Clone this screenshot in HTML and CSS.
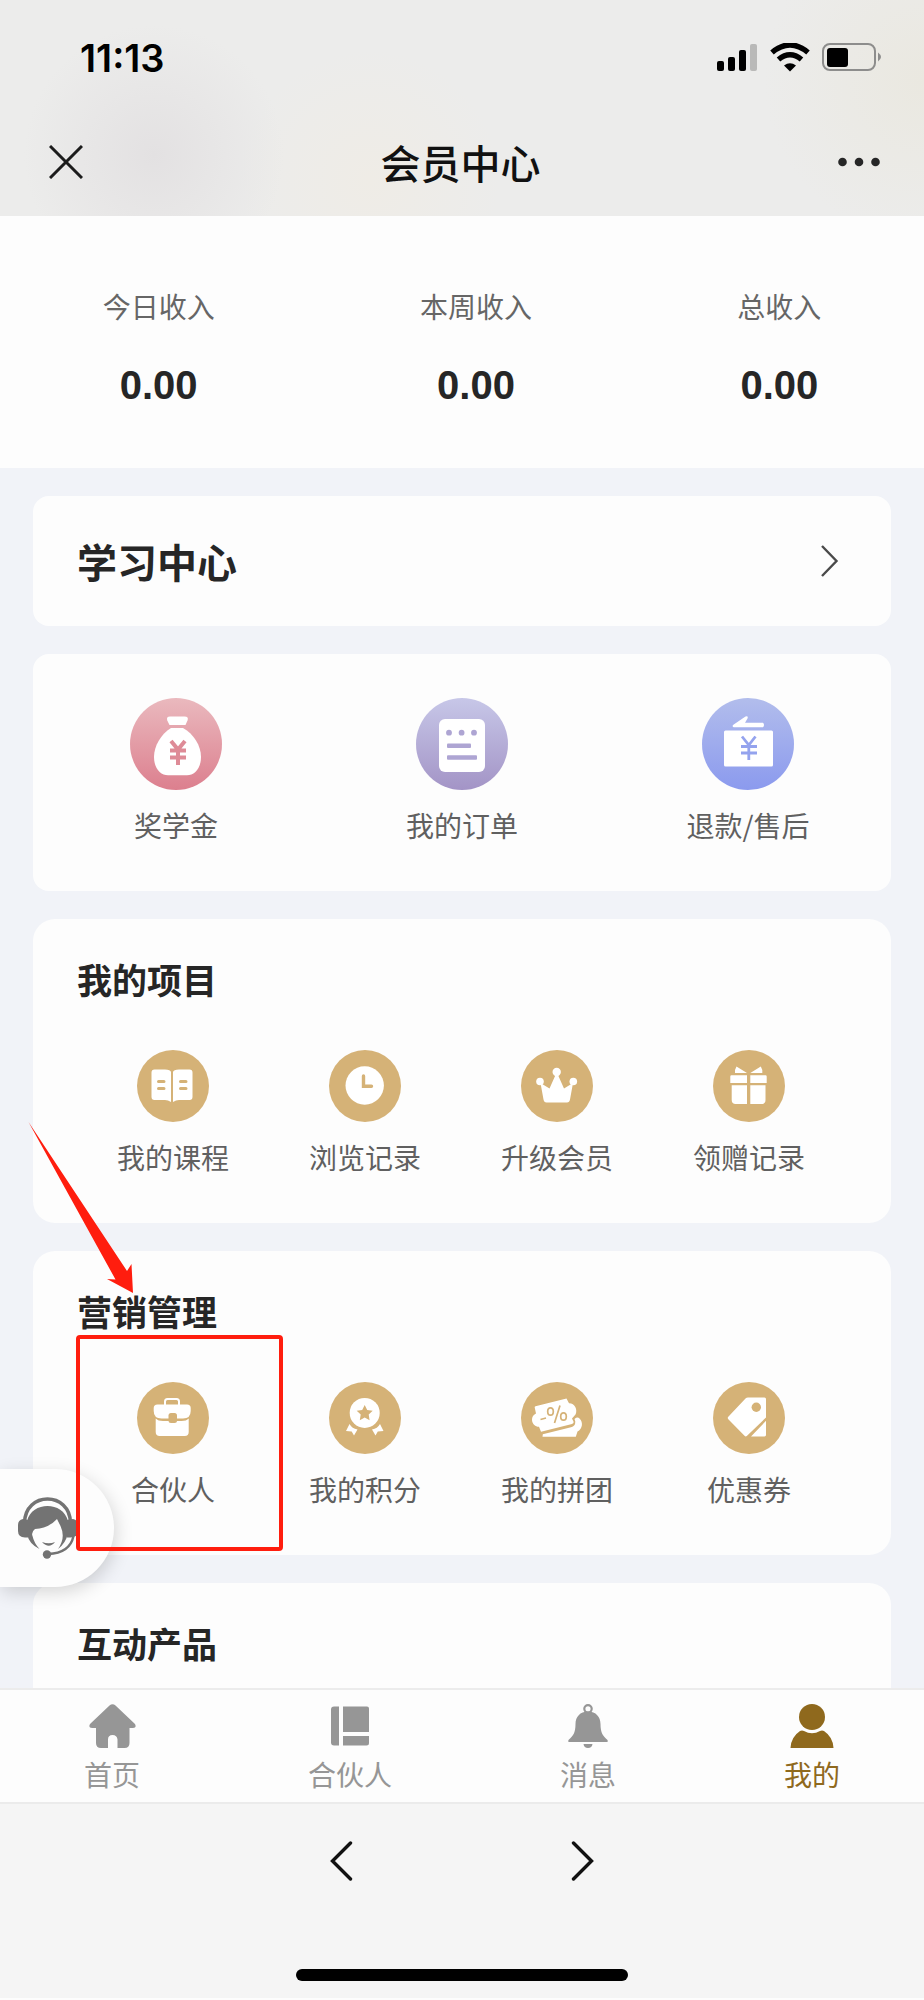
FILE: index.html
```html
<!DOCTYPE html>
<html lang="zh-CN">
<head>
<meta charset="utf-8">
<meta name="viewport" content="width=device-width, initial-scale=1">
<title>会员中心</title>
<link rel="stylesheet" href="styles.css">
</head>
<body>
<div class="page">
  <header class="header">
    <div class="status">
      <span class="status-time">11:13</span>
      <svg class="status-icons" width="166" height="30" viewBox="0 0 166 30" aria-hidden="true">
        <rect x="1" y="18" width="7" height="10" rx="2"/>
        <rect x="12" y="14" width="7" height="14" rx="2"/>
        <rect x="23" y="7" width="7" height="21" rx="2"/>
        <rect x="34" y="1" width="7" height="27" rx="2" fill="#b9b9b8"/>
        <g fill="none" stroke="#000" stroke-width="5.500">
          <path d="M56 9.500Q74 -5.500 92 9.500"/>
          <path d="M62.500 16.500Q74 7 85.500 16.500"/>
        </g>
        <path d="M68 22.500Q74 18 80 22.500L74 28.500Z"/>
        <rect x="107" y="1" width="52" height="26" rx="7" fill="none" stroke="#8d8d8c" stroke-width="2"/>
        <rect x="111" y="5" width="21" height="19" rx="3"/>
        <path d="M162 9.500Q168 14 162 18.500Z" fill="#8d8d8c"/>
      </svg>
    </div>
    <div class="nav">
      <button class="nav-btn" type="button" aria-label="关闭">
        <svg width="34" height="34" viewBox="0 0 34 34"><path d="M1 1L33 33M33 1L1 33" fill="none" stroke="#1c1c1c" stroke-width="3"/></svg>
      </button>
      <h1 class="nav-title">会员中心</h1>
      <button class="nav-btn" type="button" aria-label="更多">
        <svg width="44" height="10" viewBox="0 0 44 10"><g fill="#262626"><circle cx="4.500" cy="5" r="4.300"/><circle cx="21" cy="5" r="4.300"/><circle cx="37.500" cy="5" r="4.300"/></g></svg>
      </button>
    </div>
  </header>

  <section class="stats">
    <div class="stat"><span class="stat-label">今日收入</span><strong class="stat-value">0.00</strong></div>
    <div class="stat"><span class="stat-label">本周收入</span><strong class="stat-value">0.00</strong></div>
    <div class="stat"><span class="stat-label">总收入</span><strong class="stat-value">0.00</strong></div>
  </section>

  <main class="content">
    <a class="card study" href="#study">
      <span class="study-title">学习中心</span>
      <svg width="18" height="34" viewBox="0 0 18 34" aria-hidden="true"><path d="M1 2L15.500 17L1 32" fill="none" stroke="#4a4a4a" stroke-width="2.400"/></svg>
    </a>

    <section class="card orders">
      <a class="entry" href="#scholarship">
        <svg width="92" height="92" viewBox="0 0 92 92" aria-hidden="true">
          <defs><linearGradient id="rose" x1="0" y1="0" x2="0" y2="1"><stop offset="0" stop-color="#eab9be"/><stop offset="1" stop-color="#dc7f8e"/></linearGradient></defs>
          <circle cx="46" cy="46" r="46" fill="url(#rose)"/>
          <path d="M40 18.500H54.500Q59 18.500 57.500 22.500L55.500 27H39.500L37.300 22.500Q36 18.500 40 18.500Z" fill="#fff"/>
          <path d="M41 30H53C64 36 71 48 71 59C71 71 64 77.300 57 77.300H38C31 77.300 24 71 24 59C24 48 31 36 41 30Z" fill="#fff"/>
          <path d="M41 43L48 51.500L55 43M48 51.500V67M40 52.500H56M40 59.500H56" fill="none" stroke="#de8b97" stroke-width="4"/>
        </svg>
        <span>奖学金</span>
      </a>
      <a class="entry" href="#orders">
        <svg width="92" height="92" viewBox="0 0 92 92" aria-hidden="true">
          <defs><linearGradient id="violet" x1="0" y1="0" x2="0" y2="1"><stop offset="0" stop-color="#c7c7e8"/><stop offset="1" stop-color="#a394c6"/></linearGradient></defs>
          <circle cx="46" cy="46" r="46" fill="url(#violet)"/>
          <rect x="23" y="21" width="46" height="53" rx="6" fill="#fff"/>
          <g fill="#aea5d3"><circle cx="33" cy="34.700" r="2.900"/><circle cx="45.600" cy="34.700" r="2.900"/><circle cx="58" cy="34.700" r="2.900"/><rect x="31" y="45.500" width="24" height="4.400" rx="1"/><rect x="31" y="57.300" width="30" height="4.400" rx="1"/></g>
        </svg>
        <span>我的订单</span>
      </a>
      <a class="entry" href="#refund">
        <svg width="92" height="92" viewBox="0 0 92 92" aria-hidden="true">
          <defs><linearGradient id="azure" x1="0" y1="0" x2="0" y2="1"><stop offset="0" stop-color="#b2bdec"/><stop offset="1" stop-color="#8b9aee"/></linearGradient></defs>
          <circle cx="46" cy="46" r="46" fill="url(#azure)"/>
          <rect x="22" y="32.500" width="49" height="36" rx="1.500" fill="#fff"/>
          <path d="M31 27L43.500 18.500Q46.500 17.500 45.500 20.500L43 24.800H61Q63 27 61 29.300H32Q30 29 31 27Z" fill="#fff"/>
          <path d="M40 38.500L46.800 47L53.500 38.500M46.800 47V62M39 48.500H55M39 55H55" fill="none" stroke="#94a3ee" stroke-width="2.800"/>
        </svg>
        <span>退款/售后</span>
      </a>
    </section>

    <section class="card group">
      <h2 class="group-title">我的项目</h2>
      <div class="group-grid">
        <a class="entry entry-small" href="#courses">
          <svg width="72" height="72" viewBox="0 0 72 72" aria-hidden="true">
            <circle cx="36" cy="36" r="36" fill="#d5b277"/>
            <path d="M17.500 19.500H28Q33.500 19.500 34 22V52Q31 50 28 50H17.500Q14.500 50 14.500 47V22.500Q14.500 19.500 17.500 19.500ZM52.500 19.500H42Q36.500 19.500 36 22V52Q39 50 42 50H52.500Q55.500 50 55.500 47V22.500Q55.500 19.500 52.500 19.500Z" fill="#fff"/>
            <path d="M21.500 31.500H27M21.500 38.500H27M43.500 31.500H49M43.500 38.500H49" stroke="#d5b277" stroke-width="3" stroke-linecap="round"/>
          </svg>
          <span>我的课程</span>
        </a>
        <a class="entry entry-small" href="#history">
          <svg width="72" height="72" viewBox="0 0 72 72" aria-hidden="true">
            <circle cx="36" cy="36" r="36" fill="#d5b277"/><circle cx="35.700" cy="35.500" r="19.200" fill="#fff"/>
            <path d="M34.500 26V36.200H42.500" fill="none" stroke="#d5b277" stroke-width="3.400" stroke-linecap="round"/>
          </svg>
          <span>浏览记录</span>
        </a>
        <a class="entry entry-small" href="#upgrade">
          <svg width="72" height="72" viewBox="0 0 72 72" aria-hidden="true">
            <circle cx="36" cy="36" r="36" fill="#d5b277"/>
            <g fill="#fff"><circle cx="35.700" cy="22" r="4.200"/><circle cx="19" cy="31.500" r="3.800"/><circle cx="52.300" cy="31.500" r="3.800"/>
            <path d="M19.500 33L28.500 38.500L34.500 25H37L43 38.500L52 33L49 49.500Q48.500 52.500 46 52.500H25.500Q23 52.500 22.500 49.500Z"/></g>
          </svg>
          <span>升级会员</span>
        </a>
        <a class="entry entry-small" href="#gifts">
          <svg width="72" height="72" viewBox="0 0 72 72" aria-hidden="true">
            <circle cx="36" cy="36" r="36" fill="#d5b277"/>
            <path d="M18.500 25.300H34V33H17.300V26.500Q17.300 25.300 18.500 25.300ZM37.300 25.300H52.500Q53.700 25.300 53.700 26.500V33H37.300ZM18.700 35.300H34V54H22.700Q18.700 54 18.700 50ZM37.300 35.300H52.500V50Q52.500 54 48.500 54H37.300ZM23.500 16.500L34 22.900H22V20ZM47.800 16.500L37.300 22.900H49.300V20Z" fill="#fff"/>
          </svg>
          <span>领赠记录</span>
        </a>
      </div>
    </section>

    <section class="card group">
      <h2 class="group-title">营销管理</h2>
      <div class="group-grid">
        <a class="entry entry-small entry-marked" href="#partner">
          <svg width="72" height="72" viewBox="0 0 72 72" aria-hidden="true">
            <circle cx="36" cy="36" r="36" fill="#d5b277"/>
            <path d="M28 23V19.500Q28 17 30.500 17H39.500Q42 17 42 19.500V23" fill="none" stroke="#fff" stroke-width="2"/>
            <path d="M20.500 22.500H50Q53.700 22.500 53.700 26V29Q53.700 36.500 46 36.500H24.500Q16.700 36.500 16.700 29V26Q16.700 22.500 20.500 22.500Z" fill="#fff"/>
            <path d="M18.700 36.500Q21 39 26 39H44.500Q49.500 39 51.700 36.500V50Q51.700 54 47.700 54H22.700Q18.700 54 18.700 50Z" fill="#fff"/>
            <rect x="31.500" y="31" width="8.500" height="10" rx="2.500" fill="#d5b277"/>
          </svg>
          <span>合伙人</span>
          <i class="mark-box"></i>
          <svg class="mark-arrow" width="106" height="174" viewBox="0 0 106 174" aria-hidden="true"><path d="M0.500 1L99 150L103.500 143L105 172L79 158L87.500 158.500Z" fill="#ff1d0e"/></svg>
        </a>
        <a class="entry entry-small" href="#points">
          <svg width="72" height="72" viewBox="0 0 72 72" aria-hidden="true">
            <circle cx="36" cy="36" r="36" fill="#d5b277"/><circle cx="35.700" cy="30.900" r="15" fill="#fff"/>
            <path d="M35.700 22.900L38.200 28L43.700 28.800L39.700 32.600L40.600 38.200L35.700 35.600L30.800 38.200L31.700 32.600L27.700 28.800L33.200 28Z" fill="#d5b277"/>
            <path d="M20.500 42Q23 46.500 28.500 47.500L25 53.500L22.700 49.500L17 49ZM51 42Q48.500 46.500 43 47.500L46.500 53.500L48.800 49.500L54.500 49Z" fill="#fff"/>
          </svg>
          <span>我的积分</span>
        </a>
        <a class="entry entry-small" href="#groupbuy">
          <svg width="72" height="72" viewBox="0 0 72 72" aria-hidden="true">
            <circle cx="36" cy="36" r="36" fill="#d5b277"/>
            <path d="M13.700 25.500Q13.500 24.500 14.500 24.200L45.500 16.500L48 21.200C53.500 21 57 27.500 54.500 32.500L51 36.500L52.700 40Q52.500 41.500 51 42L20 49.800L18 44.800C10.500 44.500 8.500 34.500 15 31.500Z" fill="#fff"/>
            <path d="M21.500 54.700L21.800 52.300L50 45.300Q54.500 44 54.300 39.500L53.500 37Q56.500 34.500 58.500 36.500C62.500 40.500 61.500 47 56.500 49.500L54.800 54.700Z" fill="#fff"/>
            <g fill="none" stroke="#d5b277" stroke-width="1.700"><path d="M19.500 37.500L25 36M39 23.500L33.500 41"/><ellipse cx="29.500" cy="29.500" rx="2.800" ry="3.700"/><ellipse cx="42.500" cy="34.500" rx="2.800" ry="3.700"/></g>
          </svg>
          <span>我的拼团</span>
        </a>
        <a class="entry entry-small" href="#coupons">
          <svg width="72" height="72" viewBox="0 0 72 72" aria-hidden="true">
            <circle cx="36" cy="36" r="36" fill="#d5b277"/>
            <path d="M15.300 37.200Q14.200 36 15.300 34.800L32.500 16.500Q33.500 15.500 35 15.500H51.500Q53 15.500 53 17V35.500L33.800 54Q32.700 54.900 31.500 53.800ZM53 38.800V53Q53 54.400 51.500 54.400H38Z" fill="#fff"/>
            <circle cx="43.300" cy="25.300" r="4.700" fill="#d5b277"/>
          </svg>
          <span>优惠券</span>
        </a>
      </div>
    </section>

    <section class="card group group-cut">
      <h2 class="group-title">互动产品</h2>
    </section>

    <button class="service" type="button" aria-label="客服">
      <svg width="60" height="62" viewBox="0 0 60 62">
        <path d="M6.500 26C7 -6 52 -6 52.500 26" fill="none" stroke="#737373" stroke-width="3.600"/>
        <path d="M10 23V40.500H7Q0 40 0 34V28Q0 23 5 22ZM49 23V40.500H52.500Q60 40 60 34V28Q60 23 55 22Z" fill="#737373"/>
        <path d="M9 24C14 4 45 4 50 24V36Q48 46 40 52Q48 41 42.500 29L39 22Q31 31 17 32Q13 35 14.500 39Q16 46 21.500 52Q11 47 9 37Z" fill="#737373"/>
        <path d="M24 45Q31 47.500 37 45Q31 52.500 24 45Z" fill="#737373"/>
        <path d="M55.500 39C53 51 44 56.500 30 57" fill="none" stroke="#737373" stroke-width="2.400"/>
        <circle cx="29" cy="57.500" r="4.200" fill="#737373"/>
      </svg>
    </button>
  </main>

  <nav class="tabs">
    <a class="tab" href="#home">
      <svg width="48" height="44" viewBox="0 0 48 44" aria-hidden="true"><path d="M21.500 1.500Q24.500 -1 27.500 1.500L47 20Q49 24 45 24H41.500V39Q41.500 44 36.500 44H29.500V35.500Q29 31 24.500 31Q20 31 20 35.500V44H13Q8 44 8 39V24H4Q0 24 2 20Z"/></svg>
      <span>首页</span>
    </a>
    <a class="tab" href="#partners">
      <svg width="48" height="44" viewBox="0 0 48 44" aria-hidden="true"><path d="M8 2.500H13V41.500H8Q5 41.500 5 38.500V5.500Q5 2.500 8 2.500ZM17 2.500H41Q43 2.500 43 4.500V28H17ZM17 32H43V39Q43 41.500 40.500 41.500H17Z"/></svg>
      <span>合伙人</span>
    </a>
    <a class="tab" href="#messages">
      <svg width="48" height="44" viewBox="0 0 48 44" aria-hidden="true"><circle cx="24" cy="4.800" r="3.700" fill="none" stroke="currentColor" stroke-width="2.200"/><path d="M24 7.500C32 7.500 36.500 13 36.500 20C36.500 29 39 32 43.500 36Q44.500 38 43 38H5Q3.500 38 4.500 36C9 32 11.500 29 11.500 20C11.500 13 16 7.500 24 7.500ZM19.500 40H28.500Q28 44 24 44Q20 44 19.500 40Z"/></svg>
      <span>消息</span>
    </a>
    <a class="tab tab-active" href="#me">
      <svg width="48" height="44" viewBox="0 0 48 44" aria-hidden="true"><circle cx="24" cy="13" r="13"/><path d="M12 27Q14 26 16 27Q24 31.500 32 27Q34 26 36 27Q45 33 45.500 44H2.500Q3 33 12 27Z"/></svg>
      <span>我的</span>
    </a>
  </nav>

  <footer class="browser">
    <div class="browser-nav">
      <button class="nav-btn" type="button" aria-label="后退"><svg width="24" height="40" viewBox="0 0 24 40"><path d="M20.500 2L2.500 20L20.500 38" fill="none" stroke="#111" stroke-width="3.400" stroke-linecap="round"/></svg></button>
      <button class="nav-btn" type="button" aria-label="前进"><svg width="24" height="40" viewBox="0 0 24 40"><path d="M3.500 2L21.500 20L3.500 38" fill="none" stroke="#111" stroke-width="3.400" stroke-linecap="round"/></svg></button>
    </div>
    <div class="home-bar"></div>
  </footer>
</div>
</body>
</html>
```
FILE: styles.css
```css
* {
  box-sizing: border-box;
}

body {
  margin: 0;
  background: #fdfdfd;
  color: #262626;
  font-family: "Noto Sans CJK SC", sans-serif;
}

a {
  color: inherit;
  text-decoration: none;
}

svg {
  display: block;
  flex: none;
}

.page {
  overflow: hidden;
}

.header {
  padding: 36px 42px 24px 80px;
  background:
    radial-gradient(circle at 154px 155px, #e3e1e2, rgba(227, 225, 226, 0) 130px),
    radial-gradient(circle at 370px 180px, #efece6, rgba(239, 236, 230, 0) 130px),
    radial-gradient(circle at 100% 80px, #eae8e0, rgba(234, 232, 224, 0) 160px),
    #ececeb;
}

.status {
  display: flex;
  justify-content: space-between;
  align-items: center;
  height: 44px;
}

.status-time {
  color: #000;
  font: 600 38px/44px Inter, sans-serif;
}

.nav {
  display: flex;
  justify-content: space-between;
  align-items: center;
  margin: 52px 0 0 -31px;
}

.nav-btn {
  display: flex;
  padding: 0;
  border: 0;
  background: none;
}

.nav-title {
  margin: 0;
  color: #111;
  font-size: 40px;
  font-weight: 500;
  line-height: 60px;
}

.stats {
  display: flex;
  justify-content: space-around;
  padding: 70px 0 59px;
}

.stat {
  display: flex;
  flex-direction: column;
  align-items: center;
  gap: 35px;
}

.stat-label {
  color: #666;
  font-size: 28px;
  line-height: 40px;
}

.stat-value {
  font: bold 40px/48px "Liberation Sans", sans-serif;
}

.content {
  position: relative;
  display: flex;
  flex-direction: column;
  gap: 28px;
  padding: 28px 33px 0;
  background: #f1f3f8;
}

.card {
  border-radius: 16px;
  background: #fdfdfd;
}

.study {
  display: flex;
  justify-content: space-between;
  align-items: center;
  padding: 35px 52px 35px 44px;
}

.study-title {
  font-size: 40px;
  font-weight: 700;
  line-height: 60px;
}

.orders {
  display: grid;
  grid-template-columns: repeat(3, 1fr);
  padding: 44px 0 46px;
}

.entry {
  display: flex;
  flex-direction: column;
  align-items: center;
  gap: 15px;
  color: #606060;
  font-size: 28px;
  line-height: 40px;
}

.group {
  padding: 36px 46px 46px 44px;
  border-radius: 22px;
}

.group-title {
  margin: 0;
  font-size: 35px;
  font-weight: 700;
  line-height: 48px;
}

.group-grid {
  display: grid;
  grid-template-columns: repeat(4, 1fr);
  padding-top: 47px;
}

.group-cut {
  padding-bottom: 21px;
  border-radius: 22px 22px 0 0;
}

.entry-marked {
  position: relative;
}

.mark-box {
  position: absolute;
  z-index: 3;
  inset: -47px -14px -42px -1px;
  border: 4px solid #ff1d0e;
  border-radius: 4px;
}

.mark-arrow {
  position: absolute;
  z-index: 3;
  top: -261px;
  left: -49px;
}

.service {
  position: absolute;
  z-index: 2;
  bottom: 101px;
  left: 0;
  padding: 28px 36px 28px 18px;
  border: 0;
  border-radius: 0 59px 59px 0;
  background: #fdfdfd;
  box-shadow: 2px 5px 18px rgba(0, 0, 0, 0.16);
}

.tabs {
  position: relative;
  z-index: 4;
  display: flex;
  justify-content: space-around;
  padding: 14px 0 8px;
  border-top: 2px solid #ececec;
  background: #fdfdfd;
}

.tab {
  display: flex;
  flex-direction: column;
  align-items: center;
  gap: 6px;
  color: #969696;
  fill: currentColor;
  font-size: 28px;
  line-height: 40px;
}

.tab-active {
  color: #8f691d;
}

.browser {
  display: flex;
  flex-direction: column;
  align-items: center;
  gap: 88px;
  padding: 37px 0 17px;
  border-top: 2px solid #ebebeb;
  background: #f5f5f5;
}

.browser-nav {
  display: flex;
  gap: 216px;
}

.home-bar {
  width: 36%;
  height: 12px;
  border-radius: 6px;
  background: #000;
}
```
